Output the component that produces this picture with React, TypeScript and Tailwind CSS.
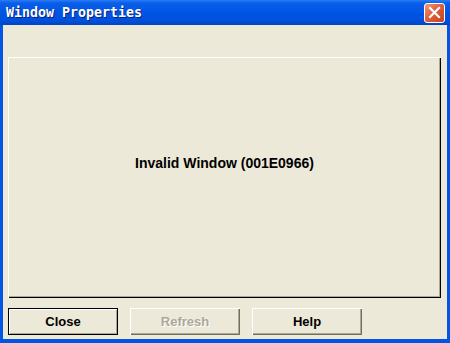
import React from 'react';

const sans = { fontFamily: '"Liberation Sans", Arial, sans-serif' };

const DialogButton: React.FC<{ label: string; isDefault?: boolean; disabled?: boolean }> = ({
  label,
  isDefault,
  disabled,
}) => {
  const frame = isDefault
    ? 'border border-black shadow-[inset_1px_1px_0_#fff,inset_-1px_-1px_0_#aca899]'
    : 'shadow-[inset_1px_1px_0_#fff,inset_-1px_-1px_0_#716f64,inset_-2px_-2px_0_#aca899]';
  return (
    <button
      className={`w-[110px] h-[27px] flex items-center justify-center bg-[#ece9d8] text-[13px] font-bold ${frame} ${
        disabled ? 'text-[#aca899] [text-shadow:1px_1px_0_#fff]' : 'text-black'
      }`}
      style={sans}
    >
      {label}
    </button>
  );
};

const App: React.FC = () => {
  return (
    <div className="w-[450px] h-[343px] flex flex-col bg-[#0055e5] overflow-hidden">
      {/* title bar */}
      <div className="h-[25px] flex items-center justify-between pl-[6px] pr-[5px] bg-[linear-gradient(to_bottom,#2b7cf6_0px,#0a5fe8_3px,#0055e5_12px,#0051dc_20px,#0043c8_25px)]">
        <span
          className="text-white text-[13.3px] font-bold leading-none [text-shadow:1px_1px_0_#0a1e7a]"
          style={{ fontFamily: '"DejaVu Sans Mono", "Liberation Mono", monospace' }}
        >
          Window Properties
        </span>
        <div className="w-[21px] h-[20px] rounded-[3px] border border-white flex items-center justify-center bg-[linear-gradient(135deg,#f09a7c,#e0603e_45%,#c3421f)]">
          <svg width="13" height="13" viewBox="0 0 13 13">
            <path d="M2 2 L11 11 M11 2 L2 11" stroke="#fff" strokeWidth="2.2" strokeLinecap="square" />
          </svg>
        </div>
      </div>

      {/* client area */}
      <div className="flex-1 mx-[3px] mb-[4px] bg-[#ece9d8] pl-[5px] pr-[6px] pt-[32px] flex flex-col">
        <div className="h-[241px] pt-[98px] flex justify-center shadow-[inset_1px_1px_0_#fff,inset_-1px_-1px_0_#000,inset_-2px_-2px_0_#aca899]">
          <span className="text-[14px] leading-[16px] font-bold text-black" style={sans}>
            Invalid Window (001E0966)
          </span>
        </div>
        <div className="mt-[10px] flex gap-[12px]">
          <DialogButton label="Close" isDefault />
          <DialogButton label="Refresh" disabled />
          <DialogButton label="Help" />
        </div>
      </div>
    </div>
  );
};

export default App;
